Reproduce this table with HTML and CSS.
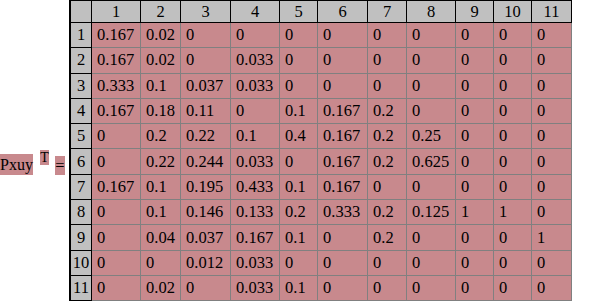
FILE: index.html
```html
<!DOCTYPE html>
<html>
<head>
<meta charset="utf-8">
<link rel="stylesheet" href="styles.css">
</head>
<body>
<div class="page">
  <div class="label">
    <span class="name">Pxuy</span>
    <span class="sup">T</span>
    <span class="eq">=</span>
  </div>
  <div class="matrix">
    <div class="h corner"></div><div class="h">1</div><div class="h">2</div><div class="h">3</div><div class="h">4</div><div class="h">5</div><div class="h">6</div><div class="h">7</div><div class="h">8</div><div class="h">9</div><div class="h">10</div><div class="h">11</div>
    <div class="r">1</div><div class="c">0.167</div><div class="c">0.02</div><div class="c">0</div><div class="c">0</div><div class="c">0</div><div class="c">0</div><div class="c">0</div><div class="c">0</div><div class="c">0</div><div class="c">0</div><div class="c">0</div>
    <div class="r">2</div><div class="c">0.167</div><div class="c">0.02</div><div class="c">0</div><div class="c">0.033</div><div class="c">0</div><div class="c">0</div><div class="c">0</div><div class="c">0</div><div class="c">0</div><div class="c">0</div><div class="c">0</div>
    <div class="r">3</div><div class="c">0.333</div><div class="c">0.1</div><div class="c">0.037</div><div class="c">0.033</div><div class="c">0</div><div class="c">0</div><div class="c">0</div><div class="c">0</div><div class="c">0</div><div class="c">0</div><div class="c">0</div>
    <div class="r">4</div><div class="c">0.167</div><div class="c">0.18</div><div class="c">0.11</div><div class="c">0</div><div class="c">0.1</div><div class="c">0.167</div><div class="c">0.2</div><div class="c">0</div><div class="c">0</div><div class="c">0</div><div class="c">0</div>
    <div class="r">5</div><div class="c">0</div><div class="c">0.2</div><div class="c">0.22</div><div class="c">0.1</div><div class="c">0.4</div><div class="c">0.167</div><div class="c">0.2</div><div class="c">0.25</div><div class="c">0</div><div class="c">0</div><div class="c">0</div>
    <div class="r">6</div><div class="c">0</div><div class="c">0.22</div><div class="c">0.244</div><div class="c">0.033</div><div class="c">0</div><div class="c">0.167</div><div class="c">0.2</div><div class="c">0.625</div><div class="c">0</div><div class="c">0</div><div class="c">0</div>
    <div class="r">7</div><div class="c">0.167</div><div class="c">0.1</div><div class="c">0.195</div><div class="c">0.433</div><div class="c">0.1</div><div class="c">0.167</div><div class="c">0</div><div class="c">0</div><div class="c">0</div><div class="c">0</div><div class="c">0</div>
    <div class="r">8</div><div class="c">0</div><div class="c">0.1</div><div class="c">0.146</div><div class="c">0.133</div><div class="c">0.2</div><div class="c">0.333</div><div class="c">0.2</div><div class="c">0.125</div><div class="c">1</div><div class="c">1</div><div class="c">0</div>
    <div class="r">9</div><div class="c">0</div><div class="c">0.04</div><div class="c">0.037</div><div class="c">0.167</div><div class="c">0.1</div><div class="c">0</div><div class="c">0.2</div><div class="c">0</div><div class="c">0</div><div class="c">0</div><div class="c">1</div>
    <div class="r">10</div><div class="c">0</div><div class="c">0</div><div class="c">0.012</div><div class="c">0.033</div><div class="c">0</div><div class="c">0</div><div class="c">0</div><div class="c">0</div><div class="c">0</div><div class="c">0</div><div class="c">0</div>
    <div class="r">11</div><div class="c">0</div><div class="c">0.02</div><div class="c">0</div><div class="c">0.033</div><div class="c">0.1</div><div class="c">0</div><div class="c">0</div><div class="c">0</div><div class="c">0</div><div class="c">0</div><div class="c">0</div>
  </div>
</div>
</body>
</html>
```
FILE: styles.css
```css
html, body {
  margin: 0;
  padding: 0;
  background: #ffffff;
}
body {
  font-family: "Liberation Serif", "Times New Roman", serif;
  font-size: 16.5px;
  color: #000000;
}
.page {
  display: flex;
  align-items: flex-start;
}
.label {
  display: flex;
  align-items: flex-start;
  margin-top: 150px;
  width: 69px;
  flex: none;
}
.name {
  background: #c8898d;
  margin-top: 4px;
  height: 21px;
  line-height: 21px;
  font-size: 16px;
  white-space: nowrap;
}
.sup {
  background: #c8898d;
  margin-left: 7px;
  width: 9px;
  height: 15px;
  line-height: 15px;
  font-size: 14px;
  text-align: center;
}
.eq {
  background: #c8898d;
  margin-left: 6px;
  margin-top: 6px;
  width: 10px;
  height: 19px;
  line-height: 19px;
  text-align: center;
}
.matrix {
  display: grid;
  grid-template-columns: 21px 49px 40px 50px 49px 38px 50px 39px 49px 38px 38px 40px;
  grid-template-rows: 22px repeat(11, 25.3px);
  border-left: 2px solid #000000;
  border-top: 1px solid #000000;
  flex: none;
}
.h, .r, .c {
  box-sizing: border-box;
  display: flex;
  align-items: center;
  line-height: 18px;
  white-space: nowrap;
  border-right: 1px solid #000000;
  border-bottom: 1px solid #000000;
}
.h {
  background: #c0c0c0;
  justify-content: center;
}
.r {
  background: #c0c0c0;
  justify-content: center;
}
.c {
  background: #c8898d;
  padding-left: 5px;
  border-right-color: #808080;
  border-bottom-color: #808080;
}
```
